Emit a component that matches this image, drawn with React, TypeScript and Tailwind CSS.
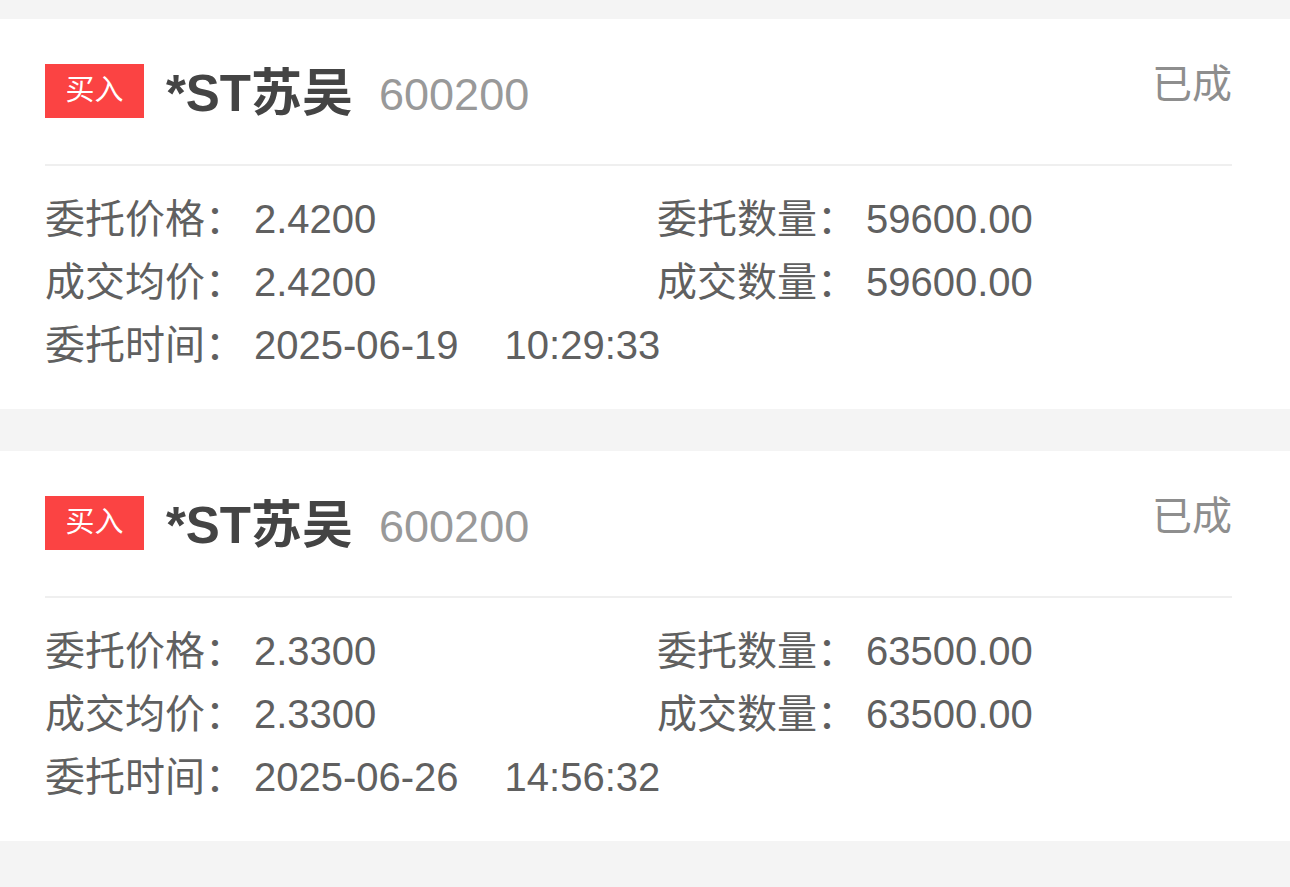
const orders = [
  {
    price: '2.4200',
    avg: '2.4200',
    qty: '59600.00',
    filled: '59600.00',
    date: '2025-06-19',
    time: '10:29:33',
  },
  {
    price: '2.3300',
    avg: '2.3300',
    qty: '63500.00',
    filled: '63500.00',
    date: '2025-06-26',
    time: '14:56:32',
  },
]

function Field({ label, children }: { label: string; children: React.ReactNode }) {
  return (
    <div className="flex items-center whitespace-nowrap">
      <span>{label}：</span>
      <span className="ml-[9px]">{children}</span>
    </div>
  )
}

function OrderCard({ o }: { o: (typeof orders)[number] }) {
  return (
    <div className="bg-white pt-[45px] pr-[58px] pb-[32px] pl-[45px]">
      {/* header */}
      <div className="flex items-start justify-between">
        <div className="flex h-[54px] items-center">
          <span className="flex h-[54px] w-[99px] items-center justify-center bg-[#fb4343] text-[29px] text-white">
            买入
          </span>
          <span className="mt-[4px] ml-[22px] text-[51px] leading-none font-bold text-[#444]">*ST苏吴</span>
          <span className="mt-[6px] ml-[26px] text-[45px] leading-none text-[#999]">600200</span>
        </div>
        <span className="text-[40px] leading-[40px] text-[#8e8e8e]">已成</span>
      </div>

      <div className="mt-[46px] h-[2px] bg-[#efefef]" />

      {/* details */}
      <div className="mt-[22px] grid grid-cols-[612px_1fr] text-[40px] leading-[63px] text-[#606060]">
        <Field label="委托价格">{o.price}</Field>
        <Field label="委托数量">{o.qty}</Field>
        <Field label="成交均价">{o.avg}</Field>
        <Field label="成交数量">{o.filled}</Field>
        <Field label="委托时间">
          {o.date}
          <span className="ml-[46px]">{o.time}</span>
        </Field>
      </div>
    </div>
  )
}

export default function App() {
  return (
    <div
      className="min-h-[887px] bg-[#f4f4f4] pt-[19px]"
      style={{ fontFamily: '"Liberation Sans", "Noto Sans CJK SC", sans-serif' }}
    >
      <div className="flex flex-col gap-[42px]">
        {orders.map((o, i) => (
          <OrderCard key={i} o={o} />
        ))}
      </div>
    </div>
  )
}
